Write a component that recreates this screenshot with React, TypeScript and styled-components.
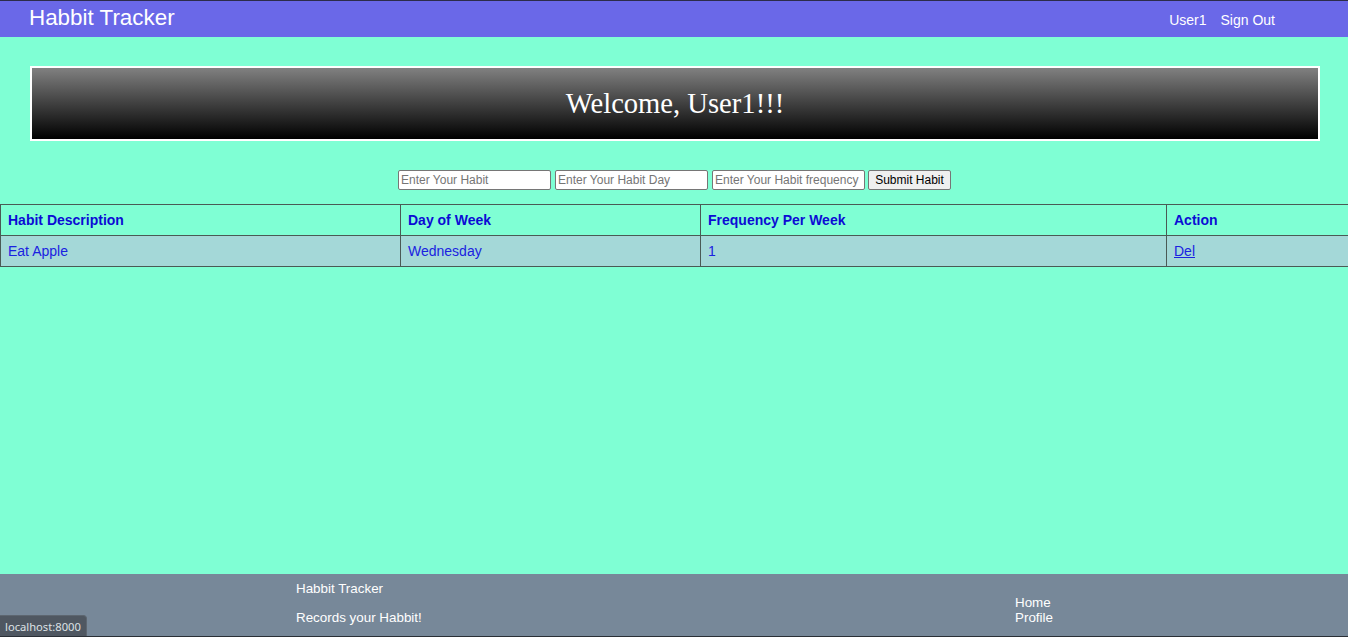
import React from "react";
import styled, { createGlobalStyle } from "styled-components";

const GlobalStyle = createGlobalStyle`
  html, body { margin: 0; padding: 0; }
  body { font-family: "Liberation Sans", Arial, sans-serif; background: #7fffd4; }
  * { box-sizing: border-box; }
`;

const Page = styled.div`
  min-height: 100vh;
  display: flex;
  flex-direction: column;
  border-top: 1px solid #2c2c4a;
  border-bottom: 1px solid #2a2f36;
  background: #7fffd4;
`;

const NavBar = styled.nav`
  height: 36px;
  background: #6a68e8;
  display: flex;
  align-items: center;
  justify-content: space-between;
  padding: 0 73px 0 29px;
`;

const Brand = styled.a`
  color: #fff;
  font-size: 22.4px;
  text-decoration: none;
  line-height: 1;
  margin-top: -1px;
`;

const NavLinks = styled.div`
  display: flex;
  gap: 14px;
  margin-top: 1px;
`;

const NavLink = styled.a`
  color: #fff;
  font-size: 14px;
  text-decoration: none;
`;

const Main = styled.main`
  flex: 1;
  display: flex;
  flex-direction: column;
`;

const Banner = styled.div`
  margin: 29px 28px 0 30px;
  height: 75px;
  border: 2px solid #fff;
  background: linear-gradient(#808080, #000);
  display: flex;
  align-items: center;
  justify-content: center;
`;

const BannerTitle = styled.h1`
  margin: 0;
  font-family: "Liberation Serif", "Times New Roman", serif;
  font-weight: normal;
  font-size: 28.6px;
  color: #fff;
`;

const HabitForm = styled.form`
  display: flex;
  justify-content: center;
  gap: 4px;
  margin: 29px 0 14px;
  padding-left: 1px;
`;

const TextInput = styled.input<{ $w: number }>`
  width: ${(p) => p.$w}px;
  height: 20px;
  font-family: "Liberation Sans", Arial, sans-serif;
  font-size: 12px;
  padding: 1px 2px;
  border: 1px solid #767676;
  border-radius: 2px;
  background: #fff;
  &::placeholder { color: #757575; }
`;

const SubmitButton = styled.button`
  width: 83px;
  height: 20px;
  font-family: "Liberation Sans", Arial, sans-serif;
  font-size: 12px;
  color: #000;
  padding: 0;
  margin-left: -1px;
  border: 1px solid #767676;
  border-radius: 2px;
  background: #efefef;
`;

const Table = styled.table`
  width: 100%;
  border-collapse: collapse;
  border: 1px solid #4a5a55;
  table-layout: fixed;
`;

const Col = styled.col<{ $w: number }>`
  width: ${(p) => p.$w}px;
`;

const HeadCell = styled.th`
  height: 31px;
  text-align: left;
  padding: 0 7px;
  border: 1px solid #4a5a55;
  font-size: 14px;
  font-weight: bold;
  color: #0c0cd4;
`;

const DataRow = styled.tr`
  background: #a4d8d8;
`;

const DataCell = styled.td`
  height: 31px;
  padding: 0 7px;
  border: 1px solid #4a5a55;
  font-size: 14px;
  color: #1a22e0;
`;

const DelLink = styled.a`
  color: #1a22e0;
  text-decoration: underline;
`;

const Footer = styled.footer`
  height: 62px;
  background: #778899;
  display: grid;
  grid-template-columns: 719px auto;
  padding-left: 296px;
  color: #fff;
  font-size: 13.4px;
`;

const FooterInfo = styled.div`
  display: flex;
  flex-direction: column;
  gap: 13px;
  padding-top: 7px;
  line-height: 16px;
`;

const FooterLinks = styled.div`
  display: flex;
  flex-direction: column;
  justify-content: flex-end;
  padding-bottom: 11px;
  line-height: 15px;
`;

const FooterLink = styled.a`
  color: #fff;
  text-decoration: none;
`;

const StatusBubble = styled.div`
  position: fixed;
  left: 0;
  bottom: 1px;
  height: 21px;
  padding: 0 5px;
  display: flex;
  align-items: center;
  background: #4f5761;
  color: #dde2e6;
  font-family: "Noto Sans", "Open Sans", sans-serif;
  font-size: 11.2px;
  border-top-right-radius: 4px;
  border: 1px solid #5d6670;
  border-left: none;
  border-bottom: none;
`;

export default function App() {
  return (
    <>
      <GlobalStyle />
      <Page>
        <NavBar>
          <Brand href="#">Habbit Tracker</Brand>
          <NavLinks>
            <NavLink href="#">User1</NavLink>
            <NavLink href="#">Sign Out</NavLink>
          </NavLinks>
        </NavBar>
        <Main>
          <Banner>
            <BannerTitle>Welcome, User1!!!</BannerTitle>
          </Banner>
          <HabitForm onSubmit={(e) => e.preventDefault()}>
            <TextInput $w={153} placeholder="Enter Your Habit" />
            <TextInput $w={153} placeholder="Enter Your Habit Day" />
            <TextInput $w={153} placeholder="Enter Your Habit frequency" />
            <SubmitButton type="submit">Submit Habit</SubmitButton>
          </HabitForm>
          <Table>
            <colgroup>
              <Col $w={400} />
              <Col $w={300} />
              <Col $w={466} />
              <Col $w={182} />
            </colgroup>
            <thead>
              <tr>
                <HeadCell>Habit Description</HeadCell>
                <HeadCell>Day of Week</HeadCell>
                <HeadCell>Frequency Per Week</HeadCell>
                <HeadCell>Action</HeadCell>
              </tr>
            </thead>
            <tbody>
              <DataRow>
                <DataCell>Eat Apple</DataCell>
                <DataCell>Wednesday</DataCell>
                <DataCell>1</DataCell>
                <DataCell>
                  <DelLink href="#">Del</DelLink>
                </DataCell>
              </DataRow>
            </tbody>
          </Table>
        </Main>
        <Footer>
          <FooterInfo>
            <span>Habbit Tracker</span>
            <span>Records your Habbit!</span>
          </FooterInfo>
          <FooterLinks>
            <FooterLink href="#">Home</FooterLink>
            <FooterLink href="#">Profile</FooterLink>
          </FooterLinks>
        </Footer>
        <StatusBubble>localhost:8000</StatusBubble>
      </Page>
    </>
  );
}
